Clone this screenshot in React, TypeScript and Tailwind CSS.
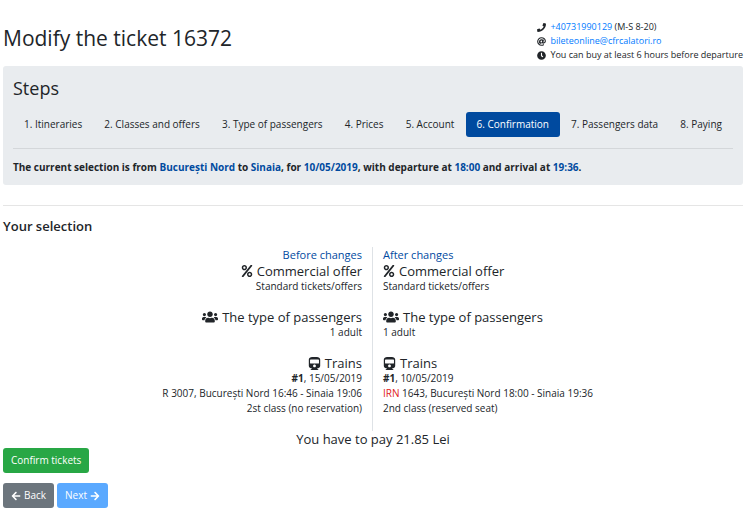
import type { ReactNode } from "react"
import {
  FaArrowLeft,
  FaArrowRight,
  FaAt,
  FaClock,
  FaPercent,
  FaPhone,
  FaTrain,
  FaUsers,
} from "react-icons/fa"

const steps = [
  "Itineraries",
  "Classes and offers",
  "Type of passengers",
  "Prices",
  "Account",
  "Confirmation",
  "Passengers data",
  "Paying",
]
const currentStep = 6

interface Selection {
  title: string
  offer: string
  passengers: string
  date: string
  train: ReactNode
  seat: string
}

const before: Selection = {
  title: "Before changes",
  offer: "Standard tickets/offers",
  passengers: "1 adult",
  date: "15/05/2019",
  train: "R 3007, București Nord 16:46 - Sinaia 19:06",
  seat: "2st class (no reservation)",
}

const after: Selection = {
  title: "After changes",
  offer: "Standard tickets/offers",
  passengers: "1 adult",
  date: "10/05/2019",
  train: (
    <>
      <span className="text-[#e02020]">IRN</span> 1643, București Nord 18:00 - Sinaia 19:36
    </>
  ),
  seat: "2nd class (reserved seat)",
}

const Mark = ({ children }: { children: ReactNode }) => (
  <span className="text-[#004a9f]">{children}</span>
)

const Heading = ({ icon, children }: { icon: ReactNode; children: ReactNode }) => (
  <h4 className="inline-flex items-center gap-1 align-top text-[13px] leading-4 font-medium">
    {icon}
    {children}
  </h4>
)

const SelectionDetails = ({ data }: { data: Selection }) => (
  <div>
    <p className="text-[11px] leading-4 text-[#004a9f]">{data.title}</p>
    <section className="mb-[15px]">
      <Heading icon={<FaPercent size={12} />}>Commercial offer</Heading>
      <p>{data.offer}</p>
    </section>
    <section className="mb-[15px]">
      <Heading icon={<FaUsers size={16} />}>The type of passengers</Heading>
      <p>{data.passengers}</p>
    </section>
    <section>
      <Heading icon={<FaTrain size={13} />}>Trains</Heading>
      <p>
        <b>#1</b>, {data.date}
      </p>
      <p>{data.train}</p>
      <p>{data.seat}</p>
    </section>
  </div>
)

const App = () => {
  return (
    <main className="pl-[3px] pr-[2px] pt-5 bg-white font-['Open_Sans',sans-serif] text-[10px] leading-[15px] text-[#212529]">
      <header className="flex justify-between">
        <h1 className="pt-1 text-[21px] leading-7 font-medium">Modify the ticket 16372</h1>
        <ul className="text-[9px] leading-[14px] [&>li]:flex [&>li]:items-center [&>li]:gap-1">
          <li>
            <FaPhone size={9} />
            <span>
              <a href="tel:+40731990129" className="text-[#007bff]">+40731990129</a> (M-S 8-20)
            </span>
          </li>
          <li>
            <FaAt size={9} />
            <a href="mailto:bileteonline@cfrcalatori.ro" className="text-[#007bff]">
              bileteonline@cfrcalatori.ro
            </a>
          </li>
          <li>
            <FaClock size={9} />
            You can buy at least 6 hours before departure
          </li>
        </ul>
      </header>

      <section className="mt-1 p-[10px] rounded-[3px] bg-[#e9ecef]">
        <h2 className="text-[18px] leading-6 font-medium">Steps</h2>
        <nav className="mt-3 flex justify-between whitespace-nowrap">
          {steps.map((step, i) => (
            <a
              key={step}
              href="#"
              className={
                i + 1 === currentStep
                  ? "px-[11px] py-[5px] rounded-[3px] bg-[#004a9f] text-white"
                  : "px-[11px] py-[5px]"
              }
            >
              {i + 1}. {step}
            </a>
          ))}
        </nav>
        <hr className="my-[11px] border-[#d4d7da]" />
        <p className="font-bold">
          The current selection is from <Mark>București Nord</Mark> to <Mark>Sinaia</Mark>, for{" "}
          <Mark>10/05/2019</Mark>, with departure at <Mark>18:00</Mark> and arrival at{" "}
          <Mark>19:36</Mark>.
        </p>
      </section>

      <hr className="mt-5 mb-3 border-[#e5e5e5]" />
      <h3 className="text-[13px] leading-4 font-semibold">Your selection</h3>

      <div className="mt-[13px] grid grid-cols-2">
        <div className="pr-[10px] pb-[15px] border-r border-[#dee2e6] text-right">
          <SelectionDetails data={before} />
        </div>
        <div className="pl-[10px] pb-[15px]">
          <SelectionDetails data={after} />
        </div>
      </div>

      <h4 className="text-center text-[13px] leading-4 font-medium">You have to pay 21.85 Lei</h4>

      <div className="mt-px text-white">
        <button type="button" className="px-2 py-[5px] rounded-[3px] bg-[#28a745]">
          Confirm tickets
        </button>
        <div className="mt-[10px] flex gap-[3px]">
          <button type="button" className="flex items-center gap-[3px] px-2 py-[5px] rounded-[3px] bg-[#6c757d]">
            <FaArrowLeft size={10} /> Back
          </button>
          <button type="button" className="flex items-center gap-[3px] px-2 py-[5px] rounded-[3px] bg-[#5aa9ff]">
            Next <FaArrowRight size={10} />
          </button>
        </div>
      </div>
    </main>
  )
}

export default App
